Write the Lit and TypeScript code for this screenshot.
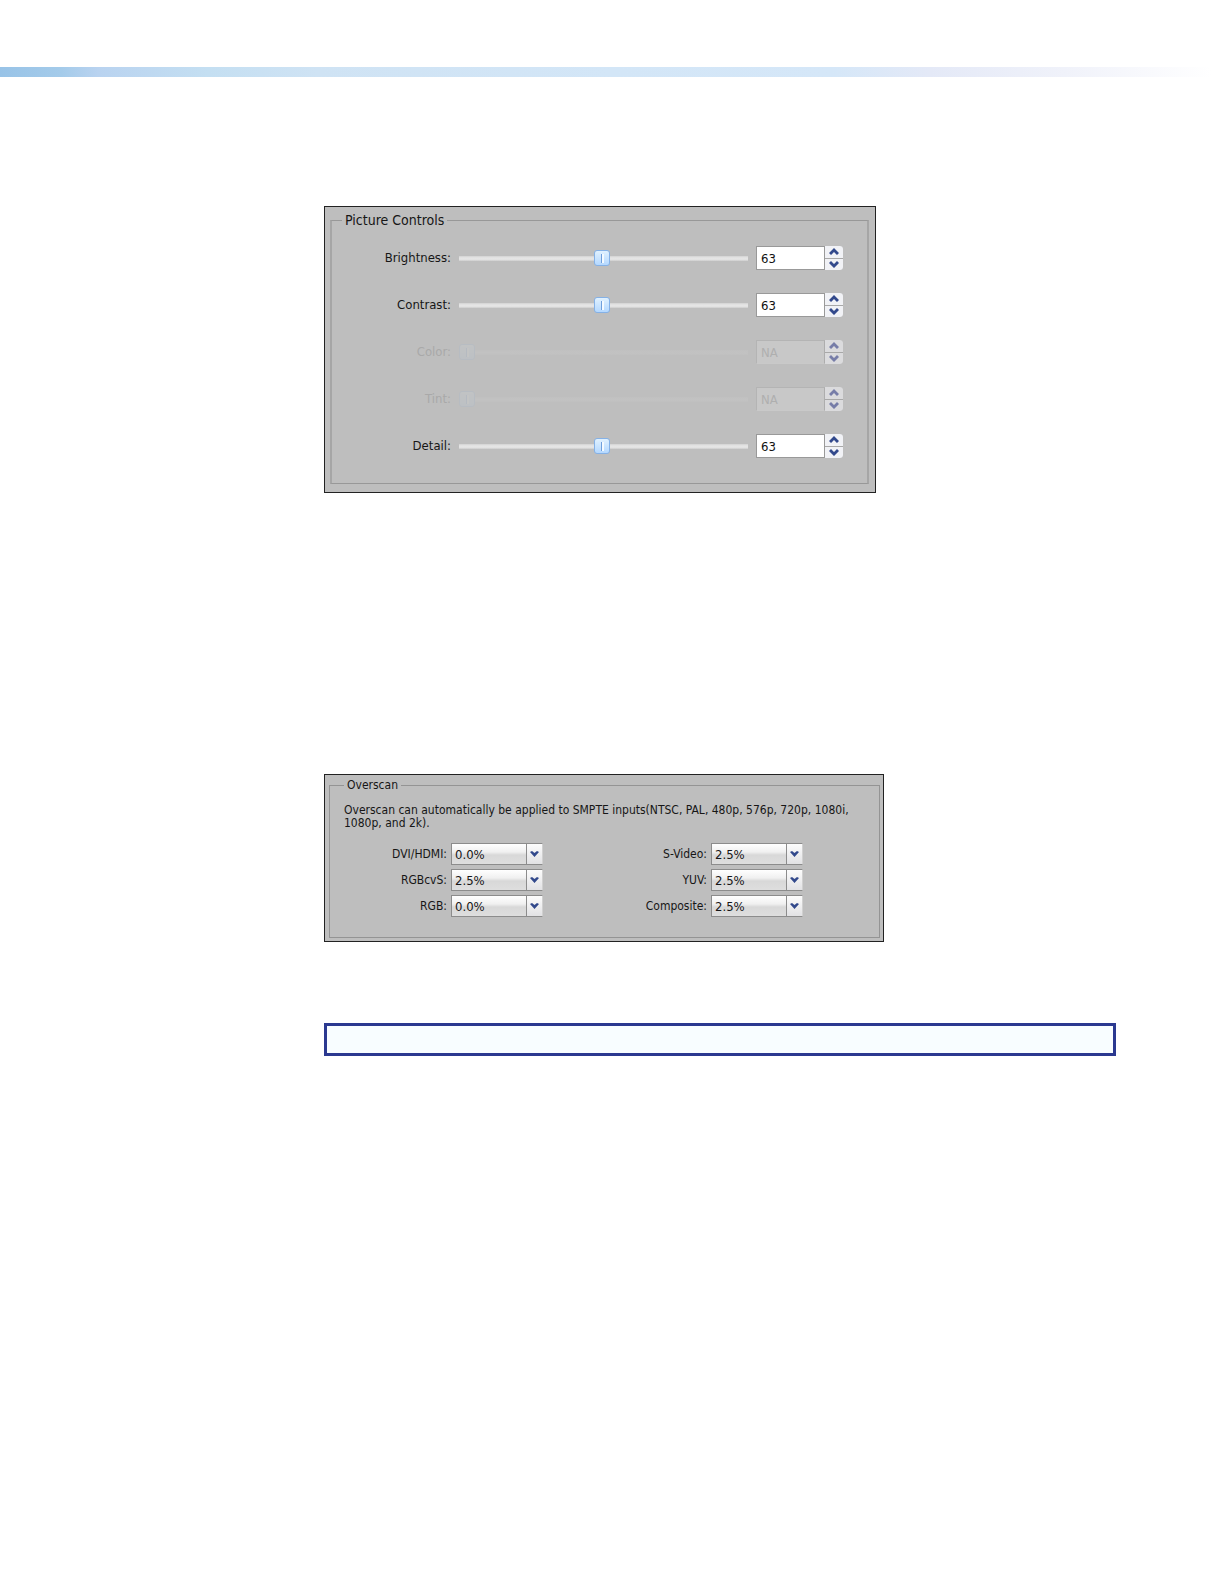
import { LitElement, html, css, svg } from "lit";
import { customElement, property } from "lit/decorators.js";

interface Control {
  id: string;
  label: string;
  value: number | null;
}

interface Scan {
  id: string;
  label: string;
  value: string;
}

const CONTROLS: Control[] = [
  { id: "brightness", label: "Brightness:", value: 63 },
  { id: "contrast", label: "Contrast:", value: 63 },
  { id: "color", label: "Color:", value: null },
  { id: "tint", label: "Tint:", value: null },
  { id: "detail", label: "Detail:", value: 63 },
];

const SCANS: Scan[] = [
  { id: "dvi", label: "DVI/HDMI:", value: "0.0%" },
  { id: "svideo", label: "S-Video:", value: "2.5%" },
  { id: "rgbcvs", label: "RGBcvS:", value: "2.5%" },
  { id: "yuv", label: "YUV:", value: "2.5%" },
  { id: "rgb", label: "RGB:", value: "0.0%" },
  { id: "composite", label: "Composite:", value: "2.5%" },
];

const PERCENTS = ["0.0%", "2.5%"];

const shared = css`
  * {
    box-sizing: border-box;
  }
  .panel {
    width: 100%;
    border: 1px solid #222;
    background: #bebebe;
    color: #161616;
  }
  .group {
    margin: 0;
    min-width: 0;
    border: 1px solid #949494;
  }
  .legend {
    padding: 0 3px;
  }
`;

@customElement("picture-controls")
export class PictureControls extends LitElement {
  @property({ attribute: false }) controls: Control[] = [];

  static styles = [
    shared,
    css`
      :host {
        display: block;
        max-width: 552px;
        font: 13px/14px "DejaVu Sans Condensed", "DejaVu Sans", sans-serif;
      }
      .panel {
        padding: 6px 6px 8px 5px;
      }
      .group {
        padding: 19px 24px 25px 10px;
        border-width: 1px 2px;
        border-color: #989898 #a6a6a6;
      }
      .legend {
        font-size: 14px;
      }
      .rows {
        display: flex;
        flex-direction: column;
        gap: 23px;
      }
      .row {
        display: grid;
        grid-template-columns: 109px minmax(0, 1fr) 87px;
        column-gap: 8px;
        align-items: center;
        height: 24px;
      }
      .label {
        text-align: right;
      }
      .off .label {
        color: #a9a9a9;
      }
      .slider {
        appearance: none;
        width: 100%;
        height: 18px;
        margin: 0;
        background: transparent;
      }
      .slider::-webkit-slider-runnable-track {
        height: 5px;
        background: linear-gradient(#d2d2d2, #e6e6e6 40%, #e2e2e2 70%, #cccccc);
      }
      .slider::-webkit-slider-thumb {
        appearance: none;
        width: 16px;
        height: 16px;
        margin-top: -6px;
        border: 1px solid #85b1e6;
        border-radius: 3px;
        background:
          linear-gradient(#6f9fdc, #6f9fdc) 6px 3px / 1px 9px no-repeat,
          linear-gradient(#f4faff, #f4faff) 7px 3px / 2px 9px no-repeat,
          linear-gradient(#e0f1ff, #b4d8ff);
      }
      .off .slider {
        opacity: 0.1;
      }
      .spin {
        display: grid;
        grid-template-columns: minmax(0, 1fr) 18px;
        height: 24px;
      }
      .value {
        width: 100%;
        height: 24px;
        padding: 1px 4px 0;
        border: 1px solid #999;
        border-radius: 0;
        background: #fff;
        color: #111;
        font: inherit;
      }
      .off .value {
        border-color: #b4b4b4 #adadad #c9c9c9 #b4b4b4;
        background: #c8c8c8;
        color: #afafaf;
      }
      .steps {
        display: grid;
        grid-template-rows: 1fr 1fr;
        gap: 1px;
        background: #a8a8a8;
        border-radius: 0 3px 3px 0;
        overflow: hidden;
      }
      .step {
        display: flex;
        align-items: center;
        justify-content: center;
        padding: 0;
        border: 0;
        background: #f1f2f6;
        color: #32498c;
      }
      .off .step {
        background: #dbdbdd;
        color: #777da8;
      }
    `,
  ];

  private arrow(d: string) {
    return html`<svg width="10" height="7" viewBox="0 0 10 7" aria-hidden="true">
      ${svg`<path d=${d} fill="currentColor" />`}
    </svg>`;
  }

  render() {
    return html`<div class="panel">
      <fieldset class="group">
        <legend class="legend">Picture Controls</legend>
        <div class="rows">
          ${this.controls.map((c) => {
            const off = c.value === null;
            return html`<div class="row ${off ? "off" : ""}">
              <label class="label" for=${c.id}>${c.label}</label>
              <input class="slider" id=${c.id} type="range" min="0" max="127"
                .value=${String(c.value ?? 0)} ?disabled=${off} />
              <div class="spin">
                <input class="value" type="text" aria-label=${c.label}
                  .value=${off ? "NA" : String(c.value)} ?disabled=${off} />
                <div class="steps">
                  <button class="step" aria-label="Increase" ?disabled=${off}>
                    ${this.arrow("M5 0 L10 5 L8 7 L5 4 L2 7 L0 5 Z")}
                  </button>
                  <button class="step" aria-label="Decrease" ?disabled=${off}>
                    ${this.arrow("M5 7 L10 2 L8 0 L5 3 L2 0 L0 2 Z")}
                  </button>
                </div>
              </div>
            </div>`;
          })}
        </div>
      </fieldset>
    </div>`;
  }
}

@customElement("overscan-panel")
export class OverscanPanel extends LitElement {
  @property({ attribute: false }) scans: Scan[] = [];

  static styles = [
    shared,
    css`
      :host {
        display: block;
        max-width: 560px;
        font: 12px/13px "DejaVu Sans Condensed", "DejaVu Sans", sans-serif;
      }
      .panel {
        padding: 4px 3px 3px 4px;
      }
      .group {
        padding: 12px 14px 20px 14px;
      }
      .note {
        margin: 0 0 13px;
      }
      .grid {
        display: grid;
        grid-template-columns: 199px 199px;
        column-gap: 61px;
        row-gap: 4px;
      }
      .field {
        display: grid;
        grid-template-columns: 1fr 92px;
        column-gap: 4px;
        align-items: center;
      }
      .label {
        text-align: right;
      }
      .combo {
        display: grid;
        grid-template-columns: 1fr 17px;
        height: 22px;
      }
      .select {
        grid-area: 1 / 1 / 2 / 3;
        appearance: none;
        width: 100%;
        height: 22px;
        padding: 1px 20px 0 3px;
        border: 1px solid #8c8c8c;
        border-radius: 0;
        background: linear-gradient(#fff, #f0f0f0 40%, #d8d8d8 55%, #dedede);
        color: #161616;
        font-family: inherit;
        font-size: 13px;
      }
      .drop {
        grid-area: 1 / 2;
        display: flex;
        align-items: center;
        justify-content: center;
        border: 1px solid #8c8c8c;
        border-right-color: #d0d0d0;
        background: linear-gradient(#fcfcfc, #e2e2e4);
        color: #32498c;
        pointer-events: none;
        z-index: 1;
      }
    `,
  ];

  render() {
    return html`<div class="panel">
      <fieldset class="group">
        <legend class="legend">Overscan</legend>
        <p class="note">
          Overscan can automatically be applied to SMPTE inputs(NTSC, PAL, 480p, 576p, 720p, 1080i,
          1080p, and 2k).
        </p>
        <div class="grid">
          ${this.scans.map(
            (s) => html`<div class="field">
              <label class="label" for=${s.id}>${s.label}</label>
              <div class="combo">
                <select class="select" id=${s.id}>
                  ${PERCENTS.map((p) => html`<option ?selected=${p === s.value}>${p}</option>`)}
                </select>
                <span class="drop">
                  <svg width="9" height="6" viewBox="0 0 9 6" aria-hidden="true">
                    <path d="M0 1 L2 0 L4.5 2 L7 0 L9 1 L4.5 6 Z" fill="currentColor" />
                  </svg>
                </span>
              </div>
            </div>`
          )}
        </div>
      </fieldset>
    </div>`;
  }
}

@customElement("app-root")
export class AppRoot extends LitElement {
  static styles = css`
    :host {
      display: block;
      min-height: 100vh;
      box-sizing: border-box;
      padding-top: 67px;
      background: #fff;
    }
    .band {
      height: 10px;
      background: linear-gradient(
        90deg,
        #98c3e7 0%,
        #a4cbea 5%,
        #b9d3f0 8%,
        #c4dff2 17%,
        #cfe3f4 26%,
        #d3e6f7 50%,
        #d5e7f8 68%,
        #e4e9f7 76%,
        #f0f2fa 87%,
        #fff 99%
      );
    }
    .content {
      display: flex;
      flex-direction: column;
      padding: 129px 108px 0 324px;
    }
    .overscan {
      margin-top: 281px;
    }
    .box {
      box-sizing: border-box;
      height: 33px;
      margin-top: 81px;
      border: 3px solid #2b3990;
      background: #f8fdff;
    }
  `;

  render() {
    return html`
      <div class="band"></div>
      <main class="content">
        <picture-controls .controls=${CONTROLS}></picture-controls>
        <overscan-panel class="overscan" .scans=${SCANS}></overscan-panel>
        <div class="box"></div>
      </main>
    `;
  }
}
